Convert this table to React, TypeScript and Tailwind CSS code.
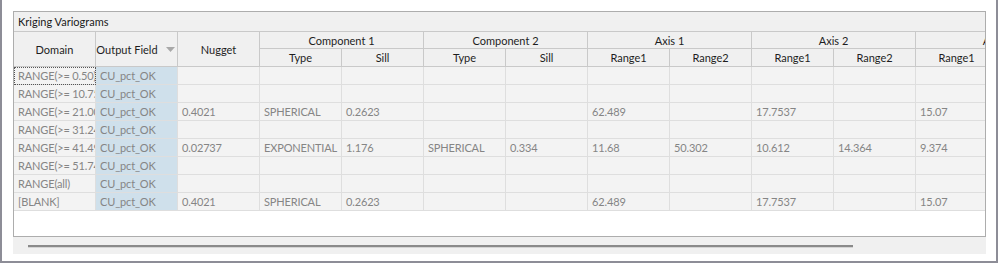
import { clsx } from "clsx";

type Row = {
  domain: string;
  nugget?: string;
  t1?: string;
  s1?: string;
  t2?: string;
  s2?: string;
  a1r1?: string;
  a1r2?: string;
  a2r1?: string;
  a2r2?: string;
  a3r1?: string;
};

const rows: Row[] = [
  { domain: "RANGE(>= 0.50)" },
  { domain: "RANGE(>= 10.75)" },
  {
    domain: "RANGE(>= 21.00)",
    nugget: "0.4021",
    t1: "SPHERICAL",
    s1: "0.2623",
    a1r1: "62.489",
    a2r1: "17.7537",
    a3r1: "15.07",
  },
  { domain: "RANGE(>= 31.24)" },
  {
    domain: "RANGE(>= 41.49)",
    nugget: "0.02737",
    t1: "EXPONENTIAL",
    s1: "1.176",
    t2: "SPHERICAL",
    s2: "0.334",
    a1r1: "11.68",
    a1r2: "50.302",
    a2r1: "10.612",
    a2r2: "14.364",
    a3r1: "9.374",
  },
  { domain: "RANGE(>= 51.74)" },
  { domain: "RANGE(all)" },
  {
    domain: "[BLANK]",
    nugget: "0.4021",
    t1: "SPHERICAL",
    s1: "0.2623",
    a1r1: "62.489",
    a2r1: "17.7537",
    a3r1: "15.07",
  },
];

const dataKeys: (keyof Row)[] = [
  "nugget",
  "t1",
  "s1",
  "t2",
  "s2",
  "a1r1",
  "a1r2",
  "a2r1",
  "a2r2",
  "a3r1",
];

const Cell = ({
  children,
  className,
}: {
  children?: React.ReactNode;
  className?: string;
}) => (
  <td
    className={clsx(
      "h-[18px] border border-[#dedede] p-0 pl-[4px] text-left align-middle whitespace-nowrap overflow-hidden text-[#858585] tracking-[-0.15px]",
      className
    )}>
    {children}
  </td>
);

const Th = ({
  children,
  className,
  colSpan,
  rowSpan,
}: {
  children?: React.ReactNode;
  className?: string;
  colSpan?: number;
  rowSpan?: number;
}) => (
  <th
    colSpan={colSpan}
    rowSpan={rowSpan}
    className={clsx(
      "border border-[#c9c9c9] bg-[#f0f0f0] p-0 font-normal text-center align-middle whitespace-nowrap overflow-hidden text-[#1e1e1e]",
      className
    )}>
    {children}
  </th>
);

export default function App() {
  return (
    <div className="w-[998px] h-[263px] bg-white border-x-2 border-b-2 border-[#8d8d97] pt-[11px] pl-[11px] text-[11px] leading-none font-['Lato',sans-serif]">
      <div className="w-[973px] h-[226px] border border-[#adadad] bg-white flex flex-col overflow-hidden">
        <div className="h-[20px] shrink-0 bg-[#f0f0f0] border-b border-[#c9c9c9] flex items-center pl-[4px] text-[#1a1a1a]">
          Kriging Variograms
        </div>
        <div className="overflow-hidden">
          <table className="table-fixed border-collapse w-[1066px] -mt-px -ml-px">
            <colgroup>
              {Array.from({ length: 13 }).map((_, i) => (
                <col key={i} className="w-[82px]" />
              ))}
            </colgroup>
            <thead>
              <tr className="h-[17px]">
                <Th rowSpan={2}>Domain</Th>
                <Th rowSpan={2}>
                  <div className="flex items-center justify-center gap-[8px] pr-[2px]">
                    <span>Output Field</span>
                    <svg width="9" height="5" viewBox="0 0 9 5">
                      <path d="M0 0 L9 0 L4.5 5 Z" fill="#a8a8a8" />
                    </svg>
                  </div>
                </Th>
                <Th rowSpan={2}>Nugget</Th>
                <Th colSpan={2}>Component 1</Th>
                <Th colSpan={2}>Component 2</Th>
                <Th colSpan={2}>Axis 1</Th>
                <Th colSpan={2}>Axis 2</Th>
                <Th colSpan={2}>Axis 3</Th>
              </tr>
              <tr className="h-[18px]">
                <Th>Type</Th>
                <Th>Sill</Th>
                <Th>Type</Th>
                <Th>Sill</Th>
                <Th>Range1</Th>
                <Th>Range2</Th>
                <Th>Range1</Th>
                <Th>Range2</Th>
                <Th>Range1</Th>
                <Th>Range2</Th>
              </tr>
            </thead>
            <tbody className="bg-[#f3f3f3]">
              {rows.map((r, i) => (
                <tr key={i} className="h-[18px]">
                  <Cell
                    className={clsx(
                      "text-clip",
                      i === 0 &&
                        "outline outline-1 outline-dotted -outline-offset-1 outline-[#555]"
                    )}>
                    {r.domain}
                  </Cell>
                  <Cell className="bg-[#cfe0eb]">CU_pct_OK</Cell>
                  {dataKeys.map((k) => (
                    <Cell key={k}>{r[k]}</Cell>
                  ))}
                  <Cell />
                </tr>
              ))}
            </tbody>
          </table>
        </div>
      </div>
      <div className="w-[973px] h-[17px] bg-[#f0f0f0] flex items-center">
        <div className="ml-[15px] mt-[2px] w-[825px] h-[3px] border-t-2 border-[#8a8a8a] bg-[#d4d4d4]" />
      </div>
    </div>
  );
}
